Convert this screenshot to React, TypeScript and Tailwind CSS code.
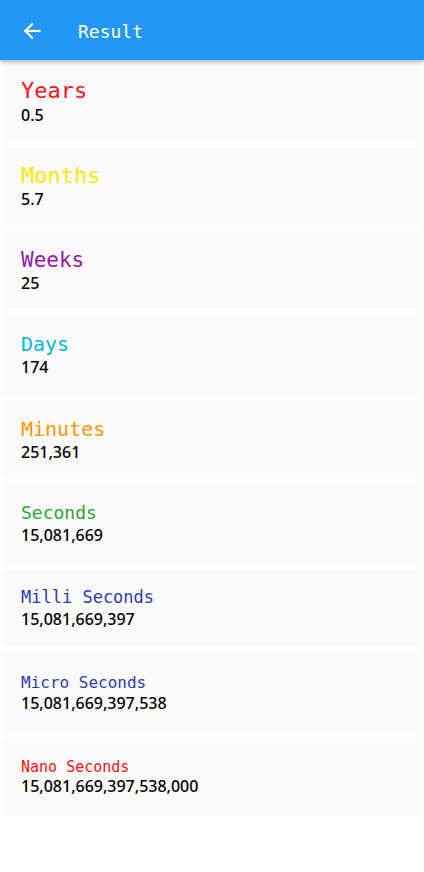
import { FunctionComponent } from "react";

type Row = { label: string; value: string; color: string; size: string };

const rows: Row[] = [
  { label: "Years", value: "0.5", color: "text-[#ff1010]", size: "text-[22px]" },
  { label: "Months", value: "5.7", color: "text-[#ffe600]", size: "text-[22px]" },
  { label: "Weeks", value: "25", color: "text-[#9418ab]", size: "text-[21px]" },
  { label: "Days", value: "174", color: "text-[#00bcd4]", size: "text-[20px]" },
  { label: "Minutes", value: "251,361", color: "text-[#ff9500]", size: "text-[20px]" },
  { label: "Seconds", value: "15,081,669", color: "text-[#2fa52f]", size: "text-[18px]" },
  { label: "Milli Seconds", value: "15,081,669,397", color: "text-[#2c3ab0]", size: "text-[17px]" },
  { label: "Micro Seconds", value: "15,081,669,397,538", color: "text-[#2c3ab0]", size: "text-[16px]" },
  { label: "Nano Seconds", value: "15,081,669,397,538,000", color: "text-[#ff1010]", size: "text-[15px]" },
];

const App: FunctionComponent = () => {
  return (
    <div className="w-[424px] h-[872px] bg-white overflow-hidden">
      {/* App bar */}
      <div className="relative z-10 h-[60px] bg-[#2196f3] flex items-center pt-[2px] shadow-[0_2px_4px_rgba(0,0,0,0.3)]">
        <div className="w-[62px] flex justify-center pl-[1px]">
          <svg width="20" height="20" viewBox="0 0 24 24" fill="none" stroke="white" strokeWidth="2.6" strokeLinecap="square">
            <path d="M21 12H4" />
            <path d="M12 4l-8 8 8 8" />
          </svg>
        </div>
        <div className="ml-[16px] text-white text-[18px] font-['DejaVu_Sans_Mono',monospace]">Result</div>
      </div>

      {/* Result cards */}
      <div className="flex flex-col gap-[6.5px] pt-[2px] px-[3px] pr-[4px]">
        {rows.map((r) => (
          <div key={r.label} className="h-[78px] bg-[#fafafa] rounded-[3px] flex flex-col justify-center pl-[18px]">
            <div className={`${r.color} ${r.size} leading-tight font-['DejaVu_Sans_Mono',monospace]`}>{r.label}</div>
            <div className="text-black text-[16px] leading-tight font-medium font-['Noto_Sans',sans-serif]">{r.value}</div>
          </div>
        ))}
      </div>
    </div>
  );
};

export default App;
